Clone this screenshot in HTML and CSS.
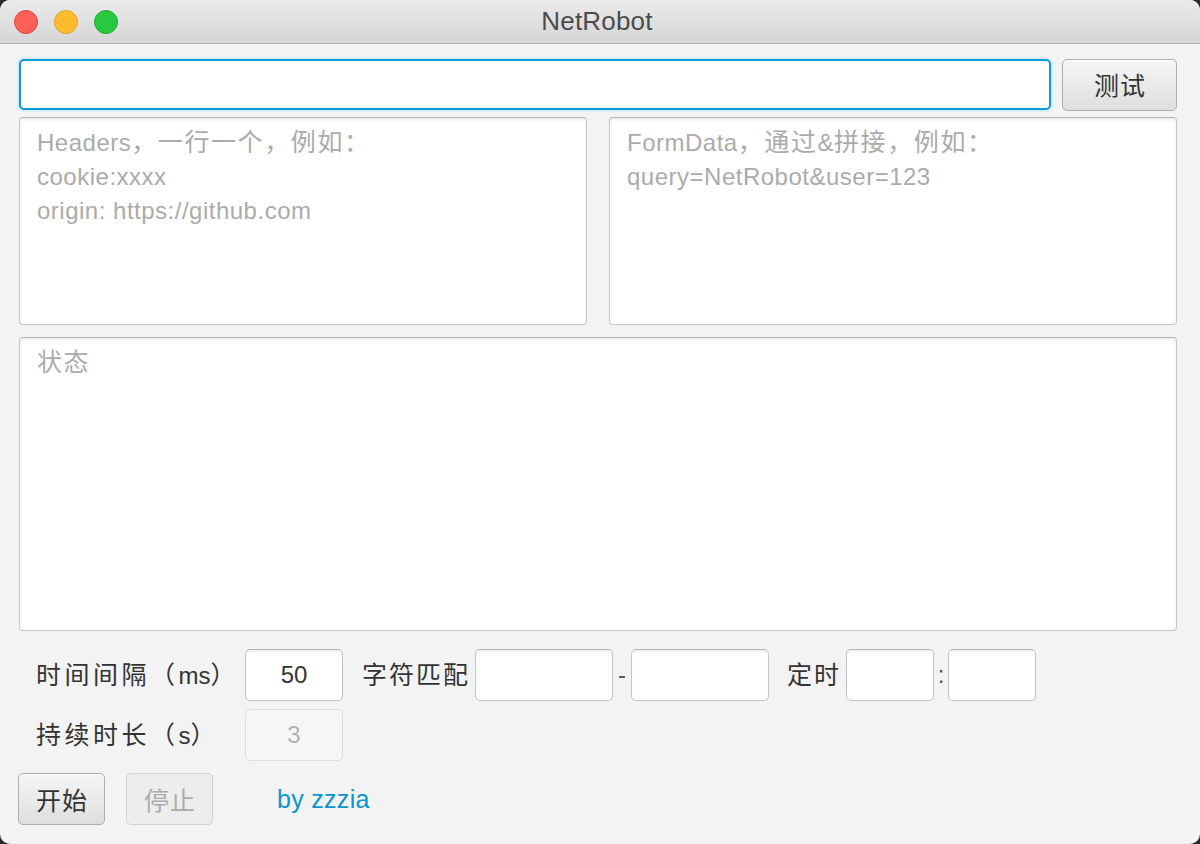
FILE: index.html
```html
<!DOCTYPE html>
<html lang="zh-CN">
<head>
<meta charset="utf-8">
<title>NetRobot</title>
<link rel="stylesheet" href="styles.css">
</head>
<body>
<div class="window">
  <div class="titlebar">
    <div class="lights">
      <span class="light red"></span>
      <span class="light yellow"></span>
      <span class="light green"></span>
    </div>
    <div class="title">NetRobot</div>
  </div>
  <div class="content">
    <div class="row url-row">
      <div class="field url focused"></div>
      <button class="btn test"><span class="zh">测试</span></button>
    </div>
    <div class="row pair">
      <div class="area"><div class="ph">Headers<span class="zh">，一行一个，例如：</span><br>cookie:xxxx<br>origin: https://github.com</div></div>
      <div class="area"><div class="ph">FormData<span class="zh">，通过</span>&amp;<span class="zh">拼接，例如：</span><br>query=NetRobot&amp;user=123</div></div>
    </div>
    <div class="area status"><div class="ph"><span class="zh">状态</span></div></div>
    <div class="controls">
      <div class="ctrl-row">
        <div class="label"><span class="zh">时间间隔（</span>ms<span class="zh">）</span></div>
        <div class="field num">50</div>
        <div class="label2"><span class="zh">字符匹配</span></div>
        <div class="field match"></div>
        <span class="sep">-</span>
        <div class="field match"></div>
        <div class="label3"><span class="zh">定时</span></div>
        <div class="field time"></div>
        <span class="sep colon">:</span>
        <div class="field time"></div>
      </div>
      <div class="ctrl-row">
        <div class="label"><span class="zh">持续时长（</span>s<span class="zh">）</span></div>
        <div class="field num disabled">3</div>
      </div>
    </div>
    <div class="bottom-row">
      <button class="btn start"><span class="zh">开始</span></button>
      <button class="btn stop" disabled><span class="zh">停止</span></button>
      <a class="link">by zzzia</a>
    </div>
  </div>
</div>
</body>
</html>
```

FILE: styles.css
```css
html, body {
  margin: 0;
  padding: 0;
  background: #2b2b2b;
}
body {
  width: 1200px;
  height: 844px;
  font-family: "Liberation Sans", "Noto Sans CJK SC", sans-serif;
  font-size: 24px;
  color: #333333;
}
.zh {
  font-family: "Noto Sans CJK SC", sans-serif;
  font-size: 25px;
  line-height: 1;
  letter-spacing: 4px;
}
.window {
  width: 1200px;
  height: 844px;
  border-radius: 10px;
  overflow: hidden;
  background: #f3f3f3;
  display: flex;
  flex-direction: column;
}
.titlebar {
  height: 43px;
  flex: none;
  background: linear-gradient(#ebebeb, #d5d5d5);
  border-bottom: 1px solid #b1b1b1;
  position: relative;
  display: flex;
  align-items: center;
  justify-content: center;
}
.lights {
  position: absolute;
  left: 14px;
  top: 10px;
  display: flex;
  gap: 16px;
}
.light {
  width: 22px;
  height: 22px;
  border-radius: 50%;
  display: block;
}
.red { background: #fe5f57; border: 1px solid #e1463f; }
.yellow { background: #febc2e; border: 1px solid #dfa123; }
.green { background: #28c840; border: 1px solid #1dad2b; }
.title {
  font-size: 26px;
  color: #4b4b4b;
  letter-spacing: 0.2px;
  margin-left: -6px;
}
.content {
  flex: 1;
  padding: 14px 23px 0 19px;
  display: flex;
  flex-direction: column;
}
.row {
  display: flex;
}
.url-row {
  gap: 11px;
  align-items: center;
  height: 53px;
}
.field {
  box-sizing: border-box;
  background: #ffffff;
  border: 1px solid #c4c4c4;
  border-top-color: #b5b5b5;
  border-radius: 5px;
  box-shadow: inset 0 2px 2px rgba(0, 0, 0, 0.06);
  flex: none;
}
.url {
  flex: 1;
  height: 51px;
}
.focused {
  border: 2px solid #0a9bd6;
  box-shadow: 0 0 0 2px #d6edf7;
  border-radius: 5px;
}
.btn {
  box-sizing: border-box;
  height: 52px;
  font-family: "Liberation Sans", "Noto Sans CJK SC", sans-serif;
  font-size: 24px;
  color: #333333;
  background: linear-gradient(#f6f6f6, #dedede);
  border: 1px solid #adadad;
  border-radius: 5px;
  box-shadow: inset 0 1px 0 #ffffff;
  padding: 0;
  display: flex;
  align-items: center;
  justify-content: center;
  flex: none;
}
.btn .zh {
  letter-spacing: 1px;
  margin-right: -1px;
}
.test {
  width: 115px;
}
.pair {
  margin-top: 6px;
  gap: 22px;
}
.area {
  box-sizing: border-box;
  background: #ffffff;
  border: 1px solid #c6c6c6;
  border-top-color: #b4b4b4;
  border-radius: 4px;
  box-shadow: inset 0 2px 3px rgba(0, 0, 0, 0.07);
  height: 208px;
  flex: 1;
  padding: 8px 17px;
}
.ph {
  color: #ababab;
  line-height: 34px;
  letter-spacing: 0.5px;
  white-space: nowrap;
}
.ph .zh {
  letter-spacing: 1.6px;
}
.status {
  flex: none;
  margin-top: 12px;
  height: 294px;
}
.controls {
  margin-top: 18px;
  display: flex;
  flex-direction: column;
  gap: 8px;
}
.ctrl-row {
  display: flex;
  align-items: center;
  height: 52px;
  white-space: nowrap;
}
.label {
  width: 209px;
  padding-left: 17px;
  flex: none;
}
.label .zh {
  letter-spacing: 3.5px;
}
.num {
  width: 98px;
  height: 52px;
  display: flex;
  align-items: center;
  justify-content: center;
  color: #333333;
}
.disabled {
  background: #f6f6f6;
  border-color: #dddddd;
  box-shadow: none;
  color: #b3b3b3;
}
.label2 {
  margin-left: 19px;
  margin-right: 5px;
}
.label2 .zh {
  letter-spacing: 2px;
}
.match {
  width: 138px;
  height: 52px;
}
.sep {
  width: 18px;
  text-align: center;
  color: #555555;
}
.colon {
  width: 14px;
}
.label3 {
  margin-left: 18px;
  margin-right: 5px;
}
.label3 .zh {
  letter-spacing: 2px;
}
.time {
  width: 88px;
  height: 52px;
}
.bottom-row {
  margin-top: 12px;
  display: flex;
  align-items: center;
  margin-left: -1px;
}
.start {
  width: 87px;
}
.stop {
  width: 87px;
  margin-left: 21px;
  color: #ababab;
  background: #ededed;
  border-color: #d2d2d2;
  box-shadow: none;
}
.link {
  margin-left: 64px;
  color: #0a96cf;
  font-size: 25px;
  letter-spacing: 0.3px;
}
```
